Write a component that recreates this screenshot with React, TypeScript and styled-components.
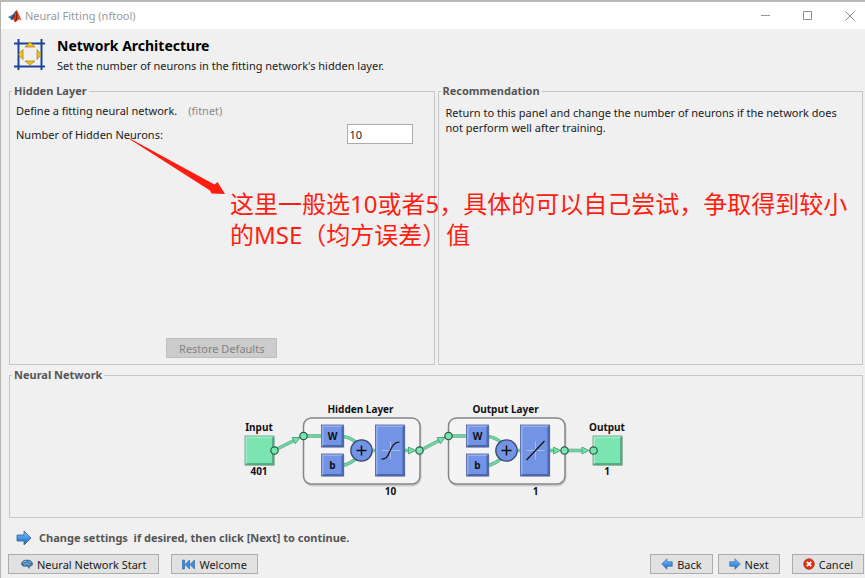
import React from "react";
import styled, { createGlobalStyle } from "styled-components";

const GlobalStyle = createGlobalStyle`
  *, *::before, *::after { box-sizing: border-box; }
  body {
    margin: 0;
    background: #f0f0f0;
    color: #1a1a1a;
    font: 11px/15px "Noto Sans", "Noto Sans CJK SC", sans-serif;
  }
`;

const Window = styled.div`
  display: flex;
  flex-direction: column;
  min-height: 100vh;
  border-top: 2px solid #b9b9b9;
  border-left: 1px solid #b4b4b4;
  background: #f0f0f0;
`;

const TitleBar = styled.header`
  display: flex;
  align-items: center;
  height: 27px;
  padding: 0 8px 0 7px;
  gap: 3px;
  background: #fff;
  color: #999;
`;

const WindowTitle = styled.span`
  flex: 1;
`;

const WindowControls = styled.div`
  display: flex;
  gap: 28px;
`;

const WindowButton = styled.button`
  display: flex;
  width: 14px;
  height: 14px;
  padding: 1px;
  border: 0;
  background: none;
`;

const Header = styled.section`
  display: flex;
  align-items: center;
  gap: 11px;
  height: 54px;
  padding: 0 12px 3px;
`;

const Heading = styled.h1`
  margin: 0 0 4px;
  color: #000;
  font-size: 14px;
  line-height: 17px;
`;

const Text = styled.p`
  margin: 0;
`;

const Content = styled.main`
  flex: 1;
  display: flex;
  flex-direction: column;
  gap: 2px;
  padding: 0 2px 0 8px;
`;

const Panels = styled.div`
  position: relative;
  flex: 1;
  display: grid;
  grid-template-columns: 1fr 1fr;
  gap: 3px;
`;

const Panel = styled.fieldset`
  display: flex;
  flex-direction: column;
  min-width: 0;
  margin: 0;
  padding: 4px 6px 6px;
  border: 1px solid #c6c6c6;
`;

const PanelTitle = styled.legend`
  margin-left: -4px;
  padding: 0 2px;
  color: #555;
  font-weight: 700;
  line-height: 16px;
`;

const Muted = styled.span`
  margin-left: 11px;
  color: #8a8a8a;
`;

const Field = styled.div`
  display: flex;
  align-items: center;
  justify-content: space-between;
  margin: 6px 15px 0 0;
`;

const NumberInput = styled.input`
  width: 66px;
  height: 20px;
  padding: 0 2px;
  border: 1px solid #abadb3;
  background: #fff;
  color: #1a1a1a;
  font: inherit;
`;

const Button = styled.button<{ $wide?: boolean }>`
  display: inline-flex;
  align-items: center;
  justify-content: center;
  gap: 4px;
  height: 20px;
  padding: 0 ${(p) => (p.$wide ? 12 : 10)}px;
  border: 1px solid #adadad;
  background: #e1e1e1;
  color: #1a1a1a;
  font: inherit;
  white-space: nowrap;

  &:disabled {
    align-self: center;
    margin-top: auto;
    border-color: #bfbfbf;
    background: #ccc;
    color: #838383;
  }
`;

const Advice = styled.p`
  margin: 2px 8px 0 1px;
`;

const Diagram = styled.svg`
  display: block;
  align-self: center;
  max-width: 100%;
  margin: 9px 0 3px;
`;

const DiagramText = styled.text`
  fill: #111;
  font-size: 10px;
  font-weight: 700;
  text-anchor: middle;
`;

const Annotation = styled.div`
  position: absolute;
  top: 105px;
  left: 221px;
  color: #ff1d10;
  font: 400 24px/31px "Noto Sans", "Noto Sans CJK SC", sans-serif;
  white-space: nowrap;
  pointer-events: none;
`;

const Arrow = styled.svg`
  position: absolute;
  top: 54px;
  left: 117px;
  pointer-events: none;
`;

const Hint = styled.p`
  display: flex;
  align-items: center;
  gap: 7px;
  height: 33px;
  margin: 3px 0 0;
  padding-left: 15px;
  color: #555;
  font-weight: 700;
  white-space: pre;
`;

const Footer = styled.footer`
  display: flex;
  justify-content: space-between;
  padding: 0 1px 4px 7px;
`;

const ButtonGroup = styled.div<{ $gap: number }>`
  display: flex;
  gap: ${(p) => p.$gap}px;
`;

const MatlabLogo = () => (
  <svg width="14" height="14" viewBox="0 0 14 14" aria-hidden="true">
    <path d="M0 8 4 6l2-1 2-4-2 8-2 2Z" fill="#3c7fb0" />
    <path d="M4 7 8.5 1 7 9l-3 2-1-1Z" fill="#5b3a55" />
    <path d="M8.7.5 14 12c-2-2-3-2-5 0L7 13.500 5 10c2-1 2.500-5 3.700-9.500Z" fill="#d9501e" />
    <path d="M8.700 1c1 3 1 7 .3 10L7 13Z" fill="#8e1f14" />
  </svg>
);

const ResizeIcon = () => (
  <svg width="33" height="33" viewBox="0 0 33 33" aria-hidden="true">
    <path d="M5.500 1v31M28.500 1v31M1 5.500h31M1 28.500h31" stroke="#1c4496" strokeWidth="2" />
    <g fill="#f3c01c" stroke="#a87a10" strokeWidth=".7">
      <path d="m17 4 5 5H12Z" />
      <path d="m17 27 5-4H12Z" />
      <path d="m5.500 16.500 4.500-5v10Z" />
      <path d="m28 16.500-4-5v10Z" />
    </g>
  </svg>
);

const BlueArrow = ({ size, left }: { size: number; left?: boolean }) => (
  <svg width={size} height={size} viewBox="0 0 16 16" aria-hidden="true">
    <defs>
      <linearGradient id="arrowBlue" x1="0" y1="0" x2="0" y2="1">
        <stop offset="0" stopColor="#8cc8f8" />
        <stop offset=".5" stopColor="#4595e6" />
        <stop offset="1" stopColor="#2464b4" />
      </linearGradient>
    </defs>
    <path
      d={left ? "M1 8 8 1v4h7v6H8v4Z" : "M15 8 8 1v4H1v6h7v4Z"}
      fill="url(#arrowBlue)"
      stroke="#2c5f9e"
      strokeWidth=".8"
    />
  </svg>
);

const BrainIcon = () => (
  <svg width="12" height="10" viewBox="0 0 12 10" aria-hidden="true">
    <path d="M.5 5C.5 2.500 3 1 6 1s5.500 1.500 5.500 4c0 1.500-1 2-2.500 2l-1 2.500L6.500 7C3 7.800.5 7 .5 5Z" fill="#3f79ad" stroke="#385878" strokeWidth=".6" />
    <path d="M2 4c1-2 3-2 4-1m1 0c1-1 2 0 3 1M3 5.500c2-1 4-1 6 0" fill="none" stroke="#a8cdea" strokeWidth=".8" />
  </svg>
);

const RewindIcon = () => (
  <svg width="13" height="11" viewBox="0 0 13 11" aria-hidden="true">
    <path d="M.5 1h2v9h-2ZM7.500 1v9L3 5.500ZM12.500 1v9L8 5.500Z" fill="#3d8de0" stroke="#25599c" strokeWidth=".6" />
  </svg>
);

const CancelIcon = () => (
  <svg width="12" height="12" viewBox="0 0 12 12" aria-hidden="true">
    <circle cx="6" cy="6" r="5.300" fill="#dc3214" stroke="#a52a1a" strokeWidth=".7" />
    <path d="m3.800 3.800 4.400 4.400m0-4.400L3.800 8.200" stroke="#fff" strokeWidth="1.800" />
  </svg>
);

type BlockProps = { x: number; y: number; w: number; h: number; green?: boolean };

const Block = ({ x, y, w, h, green }: BlockProps) => (
  <g>
    <rect x={x + 1} y={y + 1} width={w} height={h} fill="#000" opacity=".15" />
    <rect x={x} y={y} width={w} height={h} fill={green ? "#7ae5b0" : "#7394e4"} />
    <path d={`M${x} ${y + h}V${y}H${x + w}l-2 2H${x + 2}V${y + h - 2}Z`} fill={green ? "#a4f0cb" : "#95aff0"} />
    <path d={`M${x} ${y + h}H${x + w}V${y}l-2 2V${y + h - 2}H${x + 2}Z`} fill={green ? "#50b284" : "#4a68b4"} />
    <rect x={x} y={y} width={w} height={h} fill="none" stroke={green ? "#5c9c7c" : "#50629a"} strokeWidth=".8" />
  </g>
);

const Port = ({ x, y }: { x: number; y: number }) => (
  <circle cx={x} cy={y} r="3.700" fill="#7ae5b0" stroke="#2c5c46" strokeWidth="1.200" />
);

const Wire = ({ d }: { d: string }) => (
  <g fill="none">
    <path d={d} stroke="#7fa593" strokeWidth="3.600" />
    <path d={d} stroke="#64d8a0" strokeWidth="2.400" />
  </g>
);

const Head = ({ x, y, angle = 0 }: { x: number; y: number; angle?: number }) => (
  <path
    d="M-7-3.500 0 0-7 3.500Z"
    transform={`translate(${x} ${y}) rotate(${angle})`}
    fill="#6fe3aa"
    stroke="#4a9a74"
    strokeWidth=".8"
  />
);

type LayerProps = { x: number; title: string; size: number; curve: string };

const Layer = ({ x, title, size, curve }: LayerProps) => (
  <g transform={`translate(${x} 0)`}>
    <DiagramText x="57" y="412">{title}</DiagramText>
    <rect x="1" y="418.500" width="116" height="66" rx="8" fill="none" stroke="#ccc" strokeWidth="2" />
    <rect x="0" y="417" width="116.500" height="66" rx="8" fill="#f4f4f4" stroke="#858585" strokeWidth="1.500" />
    <Wire d="M0 435H18" />
    <Wire d="M39 435.500Q47 436 53 442M39 464.500Q47 463 53 457M68 449.500H73M101 449.500H110" />
    <Head x={112} y={449.5} />
    <Block x={18} y={424} w={22} h={22} />
    <Block x={18} y={453} w={22} h={22} />
    <DiagramText x="29" y="439">W</DiagramText>
    <DiagramText x="29" y="468">b</DiagramText>
    <circle cx="58" cy="449.500" r="10.700" fill="#7394e4" stroke="#3c4a78" strokeWidth="1.300" />
    <path d="M53 449.500h10M58 444.500v10" stroke="#111" strokeWidth="1.500" />
    <Block x={72} y={424} w={29} h={51} />
    <path d="M78 449.500h18M87 440.500v18" stroke="#a7bbf2" />
    <path d={curve} fill="none" stroke="#111" strokeWidth="1.200" />
    <Port x={0} y={435} />
    <DiagramText x="87" y="494">{size}</DiagramText>
  </g>
);

const NetworkDiagram = () => (
  <Diagram width="386" height="112" viewBox="243 395 386 112" role="img" aria-label="Network diagram">
    <DiagramText x="259" y="430">Input</DiagramText>
    <DiagramText x="259" y="474">401</DiagramText>
    <Block x={245} y={435} w={29} h={29} green />
    <Wire d="M274 449.500 297 438" />
    <Head x={300} y={436.5} angle={-27} />
    <Layer x={303.5} title="Hidden Layer" size={10} curve="M78 458C88 459 85 441 96 441" />
    <Wire d="M420 449.500 442 438" />
    <Head x={445} y={436.5} angle={-27} />
    <Layer x={448.5} title="Output Layer" size={1} curve="M78 459 96 440" />
    <Wire d="M565 449.500H586" />
    <Head x={589} y={449.5} />
    <DiagramText x="607" y="430">Output</DiagramText>
    <DiagramText x="607" y="474">1</DiagramText>
    <Block x={593} y={435} w={29} h={29} green />
    <Port x={274.5} y={449.5} />
    <Port x={419.5} y={449.5} />
    <Port x={564.5} y={449.5} />
    <Port x={593.5} y={449.5} />
  </Diagram>
);

export default function App() {
  return (
    <Window>
      <GlobalStyle />
      <TitleBar>
        <MatlabLogo />
        <WindowTitle>Neural Fitting (nftool)</WindowTitle>
        <WindowControls>
          <WindowButton aria-label="Minimize">
            <svg width="12" height="12"><path d="M1 5.500h9" stroke="#999" /></svg>
          </WindowButton>
          <WindowButton aria-label="Maximize">
            <svg width="12" height="12"><path d="M1.500 1.500h8v8h-8Z" fill="none" stroke="#8c8c8c" /></svg>
          </WindowButton>
          <WindowButton aria-label="Close">
            <svg width="12" height="12"><path d="m1.500 1.500 9 9m0-9-9 9" stroke="#8c8c8c" /></svg>
          </WindowButton>
        </WindowControls>
      </TitleBar>

      <Header>
        <ResizeIcon />
        <div>
          <Heading>Network Architecture</Heading>
          <Text>Set the number of neurons in the fitting network's hidden layer.</Text>
        </div>
      </Header>

      <Content>
        <Panels>
          <Panel>
            <PanelTitle>Hidden Layer</PanelTitle>
            <Text>
              Define a fitting neural network.<Muted>(fitnet)</Muted>
            </Text>
            <Field>
              <label htmlFor="neurons">Number of Hidden Neurons:</label>
              <NumberInput id="neurons" type="text" defaultValue="10" />
            </Field>
            <Button $wide disabled>Restore Defaults</Button>
          </Panel>
          <Panel>
            <PanelTitle>Recommendation</PanelTitle>
            <Advice>
              Return to this panel and change the number of neurons if the network does not perform
              well after training.
            </Advice>
          </Panel>
          <Arrow width="100" height="60" viewBox="126 137 100 60" aria-hidden="true">
            <path d="M127 137.500 129 138 214.500 184.500 217.500 182 225 194 211.500 193.500 210 190.500Z" fill="#ff1d10" />
          </Arrow>
          <Annotation lang="zh-CN">
            这里一般选10或者5，具体的可以自己尝试，争取得到较小
            <br />
            的MSE（均方误差）值
          </Annotation>
        </Panels>
        <Panel>
          <PanelTitle>Neural Network</PanelTitle>
          <NetworkDiagram />
        </Panel>
      </Content>

      <Hint>
        <BlueArrow size={16} />
        {"Change settings  if desired, then click [Next] to continue."}
      </Hint>

      <Footer>
        <ButtonGroup $gap={12}>
          <Button $wide><BrainIcon />Neural Network Start</Button>
          <Button><RewindIcon />Welcome</Button>
        </ButtonGroup>
        <ButtonGroup $gap={12}>
          <ButtonGroup $gap={5}>
            <Button><BlueArrow size={12} left />Back</Button>
            <Button><BlueArrow size={12} />Next</Button>
          </ButtonGroup>
          <Button><CancelIcon />Cancel</Button>
        </ButtonGroup>
      </Footer>
    </Window>
  );
}
